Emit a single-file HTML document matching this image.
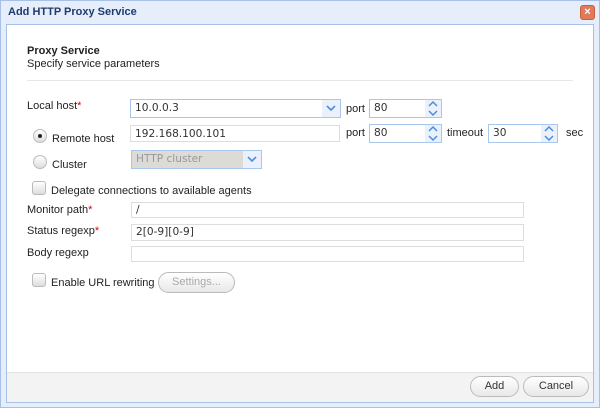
<!DOCTYPE html>
<html><head><style>
*{box-sizing:border-box;margin:0;padding:0}
body{width:600px;height:408px;background:#dfe8f7;font-family:"Liberation Sans",sans-serif;font-size:11px;color:#222;position:relative;overflow:hidden}
.a{position:absolute}
.win{left:0;top:0;width:600px;height:408px;border:1px solid #a9c0e6;background:#e6eefb}
.title{left:8px;top:6px;font-weight:bold;font-size:11px;color:#1f3a6e}
.close{left:580px;top:5px;width:15px;height:15px;border-radius:3px;background:#e07a5a;border:1px solid #c86040;color:#fff;font-size:11px;line-height:13px;text-align:center;font-weight:bold}
.panel{left:6px;top:24px;width:588px;height:379px;background:#fff;border:1px solid #a9c0e6}
.foot{left:7px;top:372px;width:586px;height:30px;background:#f3f3f3;border-top:1px solid #e4e4e4}
.inp{position:absolute;height:18px;border:1px solid #ddd;background:#fff;font-family:"DejaVu Sans",sans-serif;font-size:10.6px;padding-left:4px;line-height:16px;color:#333}
.sel{border-color:#a9c6ec}
.arr{position:absolute;right:0;top:0;width:18px;height:100%;background:#eaf1fb}
.spin{position:absolute;right:0;top:0;width:16px;height:100%;background:#eaf1fb}
svg{position:absolute}
.req{color:#d00}
.lbl{position:absolute;font-size:11px;margin-top:1px}
.rad{position:absolute;width:14px;height:14px;border-radius:50%;border:1px solid #bbb;background:linear-gradient(#fff,#ddd)}
.chk{position:absolute;width:14px;height:14px;border-radius:3px;border:1px solid #bbb;background:linear-gradient(#fff,#ddd)}
.btn{position:absolute;height:21px;border:1px solid #bbb;border-radius:11px;background:linear-gradient(#fff,#e8e8e8);text-align:center;line-height:19px;font-size:11px;color:#333}
</style></head><body>
<div class="a win"></div>
<div class="a title">Add HTTP Proxy Service</div>
<div class="a close">×</div>
<div class="a panel"></div>
<div class="a foot"></div>
<div class="a" style="left:27px;top:45px;font-weight:bold">Proxy Service</div>
<div class="a" style="left:27px;top:58px">Specify service parameters</div>
<div class="a" style="left:27px;top:80px;width:546px;height:1px;background:#e6e6e6"></div>

<div class="lbl" style="left:27px;top:99px">Local host<span class="req">*</span></div>
<div class="inp sel" style="left:130px;top:99px;width:211px;height:19px">10.0.0.3<div class="arr"><svg width="18" height="17"><path d="M5 6l4 4 4-4" fill="none" stroke="#4a8de0" stroke-width="1.6"/></svg></div></div>
<div class="lbl" style="left:346px;top:102px">port</div>
<div class="inp sel" style="left:369px;top:99px;width:73px;height:19px">80<div class="spin"><svg width="16" height="17"><path d="M4 6l4-4 4 4M4 11l4 4 4-4" fill="none" stroke="#4a8de0" stroke-width="1.5"/></svg></div></div>

<div class="rad" style="left:33px;top:129px"><div style="position:absolute;left:4px;top:4px;width:4px;height:4px;border-radius:50%;background:#222"></div></div>
<div class="lbl" style="left:52px;top:132px">Remote host</div>
<div class="inp" style="left:130px;top:125px;width:210px;height:17px">192.168.100.101</div>
<div class="lbl" style="left:346px;top:126px">port</div>
<div class="inp sel" style="left:369px;top:124px;width:73px;height:19px">80<div class="spin"><svg width="16" height="17"><path d="M4 6l4-4 4 4M4 11l4 4 4-4" fill="none" stroke="#4a8de0" stroke-width="1.5"/></svg></div></div>
<div class="lbl" style="left:447px;top:126px">timeout</div>
<div class="inp sel" style="left:488px;top:124px;width:70px;height:19px">30<div class="spin"><svg width="16" height="17"><path d="M4 6l4-4 4 4M4 11l4 4 4-4" fill="none" stroke="#4a8de0" stroke-width="1.5"/></svg></div></div>
<div class="lbl" style="left:566px;top:126px">sec</div>

<div class="rad" style="left:33px;top:155px"></div>
<div class="lbl" style="left:52px;top:158px">Cluster</div>
<div class="inp sel" style="left:131px;top:150px;width:131px;height:19px;background:#dddbd8;color:#999">HTTP cluster<div class="arr"><svg width="18" height="17"><path d="M5 6l4 4 4-4" fill="none" stroke="#4a8de0" stroke-width="1.6"/></svg></div></div>

<div class="chk" style="left:32px;top:181px"></div>
<div class="lbl" style="left:51px;top:184px">Delegate connections to available agents</div>

<div class="lbl" style="left:27px;top:203px">Monitor path<span class="req">*</span></div>
<div class="inp" style="left:131px;top:202px;width:393px;height:16px;line-height:14px">/</div>
<div class="lbl" style="left:27px;top:224px">Status regexp<span class="req">*</span></div>
<div class="inp" style="left:131px;top:224px;width:393px;height:17px;line-height:15px">2[0-9][0-9]</div>
<div class="lbl" style="left:27px;top:246px">Body regexp</div>
<div class="inp" style="left:131px;top:246px;width:393px;height:16px"></div>

<div class="chk" style="left:32px;top:273px"></div>
<div class="lbl" style="left:51px;top:276px">Enable URL rewriting</div>
<div class="btn" style="left:158px;top:272px;width:77px;color:#aaa">Settings...</div>

<div class="btn" style="left:470px;top:376px;width:49px">Add</div>
<div class="btn" style="left:523px;top:376px;width:66px">Cancel</div>
</body></html>
